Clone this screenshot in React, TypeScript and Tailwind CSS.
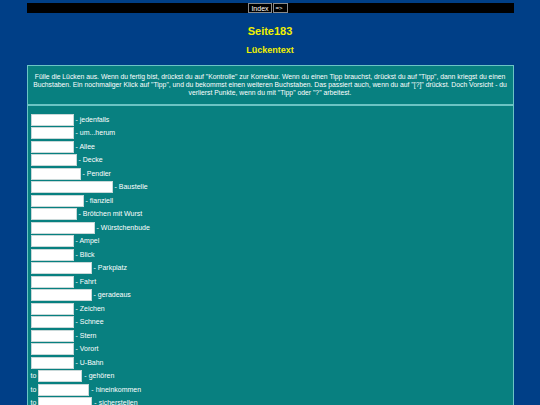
const rows: { pre?: string; w: number; label: string }[] = [
  { w: 43, label: 'jedenfalls' },
  { w: 43, label: 'um...herum' },
  { w: 43, label: 'Allee' },
  { w: 46, label: 'Decke' },
  { w: 50, label: 'Pendler' },
  { w: 82, label: 'Baustelle' },
  { w: 53, label: 'fianziell' },
  { w: 46, label: 'Brötchen mit Wurst' },
  { w: 64, label: 'Würstchenbude' },
  { w: 43, label: 'Ampel' },
  { w: 43, label: 'Blick' },
  { w: 61, label: 'Parkplatz' },
  { w: 43, label: 'Fahrt' },
  { w: 61, label: 'geradeaus' },
  { w: 43, label: 'Zeichen' },
  { w: 43, label: 'Schnee' },
  { w: 43, label: 'Stern' },
  { w: 43, label: 'Vorort' },
  { w: 43, label: 'U-Bahn' },
  { pre: 'to', w: 44, label: 'gehören' },
  { pre: 'to', w: 51, label: 'hineinkommen' },
  { pre: 'to', w: 54, label: 'sicherstellen' },
];

const App = () => {
  return (
    <div className="min-h-screen bg-[#003f87] pt-[3px] font-['Liberation_Sans',Arial,sans-serif] text-white">
      <div className="mx-auto flex h-[10px] w-[487px] justify-center bg-black">
        <span className="ml-[-4px] flex items-center border border-[#8a8a8a] px-[2px] text-[7px] leading-none">Index</span>
        <span className="ml-px flex items-center border border-[#8a8a8a] pl-[2px] pr-[4px] text-[6px] leading-none">=&gt;</span>
      </div>

      <h1 className="mt-[12px] text-center text-[11px] font-bold leading-[13px] text-[#f0f000]">Seite183</h1>
      <h2 className="mt-[7px] text-center text-[9px] font-bold leading-[11px] text-[#f0f000]">Lückentext</h2>

      <div className="mx-auto mt-[9px] w-[487px] border border-[#6cc4c4] bg-[#088080]">
        <p className="border-b-2 border-[#6cc4c4] px-[5px] py-[7px] text-center text-[6.8px] leading-[8px]">
          Fülle die Lücken aus. Wenn du fertig bist, drückst du auf "Kontrolle" zur Korrektur. Wenn du einen Tipp brauchst, drückst du auf "Tipp", dann kriegst du einen Buchstaben. Ein nochmaliger Klick auf "Tipp", und du bekommst einen weiteren Buchstaben. Das passiert auch, wenn du auf "[?]" drückst. Doch Vorsicht - du verlierst Punkte, wenn du mit "Tipp" oder "?" arbeitest.
        </p>
        <div className="px-[3px] pt-[7px] pb-[10px]">
          {rows.map((r, i) => (
            <div key={i} className="flex h-[13.5px] items-center text-[7px]">
              {r.pre && <span className="mr-[2px]">{r.pre}</span>}
              <input
                type="text"
                className="h-[12px] border border-[#c8d8d8] bg-white outline-none"
                style={{ width: r.w }}
              />
              <span className="ml-[2px]">- {r.label}</span>
            </div>
          ))}
        </div>
      </div>
    </div>
  );
};

export default App;
